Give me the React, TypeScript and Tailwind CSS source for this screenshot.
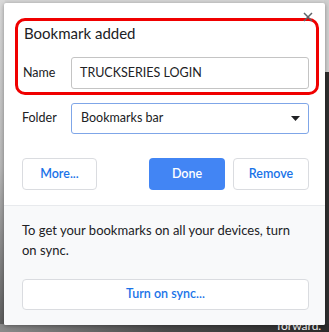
import React from "react";

const font = { fontFamily: "Lato, 'Liberation Sans', sans-serif" };

function Backdrop() {
  return (
    <>
      <div className="absolute left-0 top-0 h-full w-[5px] bg-gradient-to-b from-[#d9d9d9] via-[#b8b8b8] to-[#5a5a5a]" />
      <div className="absolute right-0 top-0 h-[72px] w-[5px] bg-[#cfcfcf]" />
      <div className="absolute right-0 top-[72px] h-[260px] w-[5px] bg-[#2e2e2e]" />
      <div className="absolute bottom-0 left-0 h-[8px] w-full bg-gradient-to-r from-[#8a8a8a] via-[#4a4a4a] to-[#2a2a2a]" />
      <div className="absolute bottom-0 left-[277px] text-[12px] leading-[12px] text-white" style={font}>
        forward.
      </div>
    </>
  );
}

export default function App() {
  return (
    <div className="relative h-[332px] w-[329px] overflow-hidden bg-[#d4d4d4]" style={font}>
      <Backdrop />
      <div className="relative ml-[4px] mt-[3px] flex h-[322px] w-[321px] flex-col overflow-hidden rounded-[2px] bg-white shadow-[0_1px_4px_rgba(0,0,0,0.35)]">
        <button className="absolute right-[12px] top-[9px] text-[#5f6368]">
          <svg width="10" height="10" viewBox="0 0 10 10">
            <path d="M1 1 L9 9 M9 1 L1 9" stroke="currentColor" strokeWidth="1.5" />
          </svg>
        </button>
        <div className="pl-[11px] pr-[6px] pt-[15px]">
          <div className="rounded-[10px] border-[3px] border-[#f00000] pb-[3px] pl-[4px] pr-[7px] pt-[2px]">
            <div className="pl-[2px] text-[15px] leading-[20px] text-[#202124]">Bookmark added</div>
            <div className="mt-[14px] flex items-center">
              <span className="w-[49px] pl-[1px] text-[12.5px] text-[#202124]">Name</span>
              <div className="flex h-[32px] flex-1 items-center rounded-[3px] border border-[#c4c4c4] px-[8px] text-[12.5px] text-[#202124]">
                TRUCKSERIES LOGIN
              </div>
            </div>
          </div>
        </div>
        <div className="mt-[8px] flex items-center pl-[18px]">
          <span className="w-[49px] text-[12.5px] text-[#202124]">Folder</span>
          <div className="flex h-[31px] w-[238px] items-center justify-between rounded-[3px] border border-[#7fa6e8] pl-[9px] pr-[8px] text-[12.5px] text-[#202124]">
            <span>Bookmarks bar</span>
            <svg width="9" height="5" viewBox="0 0 9 5">
              <path d="M0 0 H9 L4.5 5 Z" fill="#202124" />
            </svg>
          </div>
        </div>
        <div className="mt-[24px] flex items-center pl-[18px] pr-[16px]">
          <button className="h-[32px] w-[75px] rounded-[4px] border border-[#dadce0] text-[12.5px] font-semibold text-[#1a73e8]">
            More...
          </button>
          <button className="ml-auto h-[32px] w-[76px] rounded-[4px] bg-[#4285f4] text-[12.5px] font-semibold text-white">
            Done
          </button>
          <button className="ml-[8px] h-[32px] w-[76px] rounded-[4px] border border-[#dadce0] text-[12.5px] font-semibold text-[#1a73e8]">
            Remove
          </button>
        </div>
        <div className="mt-[15px] flex-1 border-t border-[#e8eaed] bg-[#f8f9fa] pl-[18px] pr-[16px] pt-[14px]">
          <p className="w-[280px] text-[13px] leading-[20px] text-[#202124]">
            To get your bookmarks on all your devices, turn on sync.
          </p>
          <button className="mt-[19px] h-[31px] w-full rounded-[4px] border border-[#dadce0] bg-white text-[12.5px] font-semibold text-[#1a73e8]">
            Turn on sync...
          </button>
        </div>
      </div>
    </div>
  );
}
